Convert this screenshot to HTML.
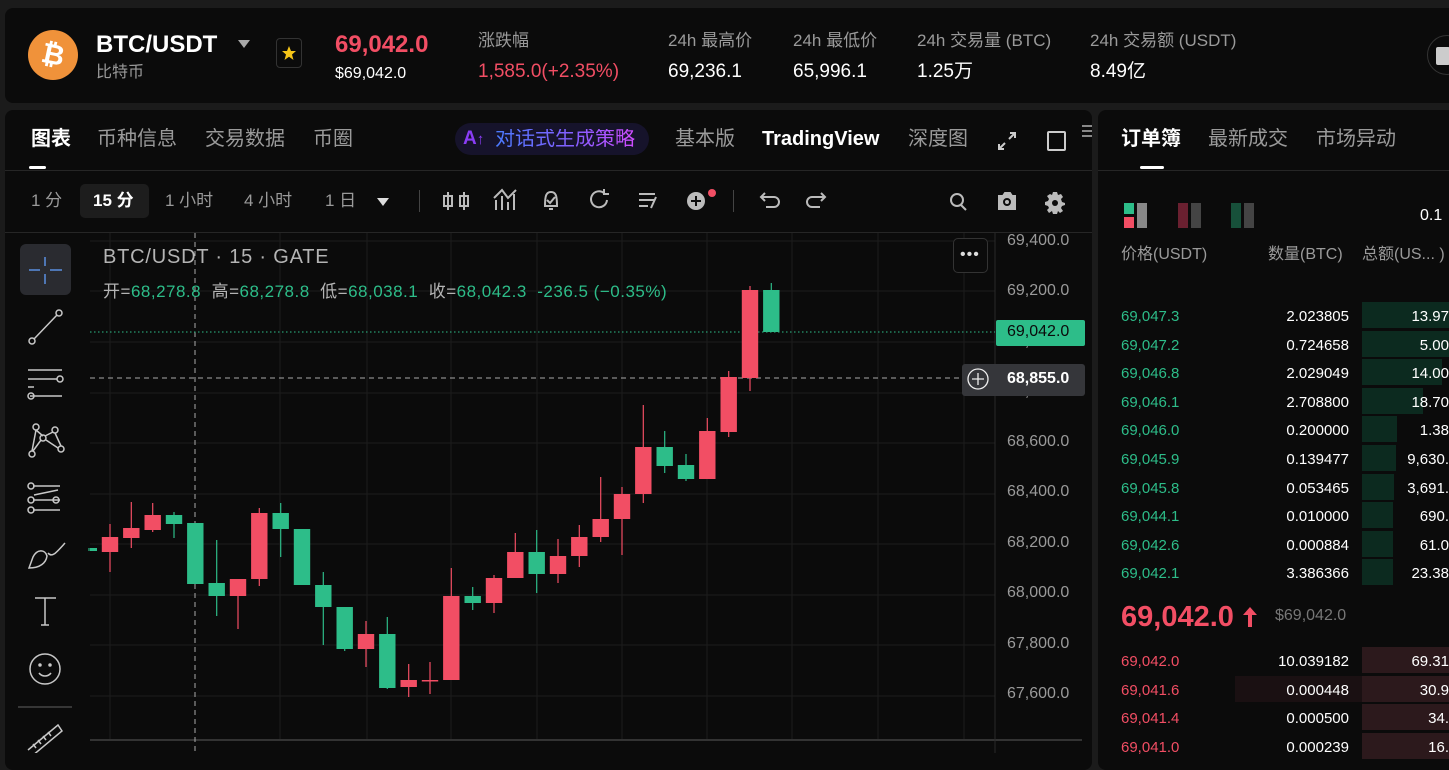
<!DOCTYPE html>
<html><head><meta charset="utf-8">
<style>
*{margin:0;padding:0;box-sizing:border-box}
body{width:1449px;height:753px;overflow:hidden;background:#1b1b1b;font-family:"Liberation Sans","Noto Sans CJK SC",sans-serif;color:#fff;position:relative}
.p{position:absolute;background:#0b0b0b;border-radius:8px}
.t{position:absolute;white-space:nowrap;line-height:1}
.g{color:#9a9a9a}
.red{color:#f24e64}
.grn{color:#2dbd89}
.ob .t{font-size:15px}
</style></head><body>
<div class="p" style="left:5px;top:8px;width:1460px;height:95px"></div>
<div class="p" style="left:5px;top:110px;width:1087px;height:660px"></div>
<div class="p" style="left:1098px;top:110px;width:360px;height:660px"></div>

<!-- header -->
<svg style="position:absolute;left:28px;top:30px" width="50" height="50"><circle cx="25" cy="25" r="25" fill="#f0923a"/><text x="25" y="34" font-size="28" font-weight="bold" fill="#fff" text-anchor="middle" font-family="Liberation Sans" transform="rotate(12 25 25)">₿</text></svg>
<div class="t" style="left:96px;top:33px;font-size:24px;font-weight:bold">BTC/USDT</div>
<svg style="position:absolute;left:238px;top:40px" width="12" height="8"><path d="M0 0H12L6 8Z" fill="#aaa"/></svg>
<div class="t g" style="left:96px;top:65px;font-size:16px">比特币</div>
<div style="position:absolute;left:276px;top:38px;width:26px;height:30px;border:1px solid #333;border-radius:4px"></div>
<svg style="position:absolute;left:281px;top:45px" width="16" height="16"><path d="M8 1L10 6H15L11 9.5L12.5 15L8 11.8L3.5 15L5 9.5L1 6H6Z" fill="#f5c518"/></svg>
<div class="t red" style="left:335px;top:33px;font-size:24px;font-weight:bold">69,042.0</div>
<div class="t" style="left:335px;top:66px;font-size:16px">$69,042.0</div>
<div class="t g" style="left:478px;top:32px;font-size:17px">涨跌幅</div>
<div class="t red" style="left:478px;top:62px;font-size:19px">1,585.0(+2.35%)</div>
<div class="t g" style="left:668px;top:32px;font-size:17px">24h 最高价</div>
<div class="t" style="left:668px;top:62px;font-size:19px">69,236.1</div>
<div class="t g" style="left:793px;top:32px;font-size:17px">24h 最低价</div>
<div class="t" style="left:793px;top:62px;font-size:19px">65,996.1</div>
<div class="t g" style="left:917px;top:32px;font-size:17px">24h 交易量 (BTC)</div>
<div class="t" style="left:917px;top:62px;font-size:19px">1.25万</div>
<div class="t g" style="left:1090px;top:32px;font-size:17px">24h 交易额 (USDT)</div>
<div class="t" style="left:1090px;top:62px;font-size:19px">8.49亿</div>
<div style="position:absolute;left:1427px;top:35px;width:40px;height:40px;border:1px solid #333;border-radius:50%"></div>
<div style="position:absolute;left:1436px;top:47px;width:14px;height:18px;background:#ccc;border-radius:2px"></div>

<!-- chart tabs -->
<div class="t" style="left:31px;top:129px;font-size:20px;font-weight:bold">图表</div>
<div class="t g" style="left:97px;top:129px;font-size:20px">币种信息</div>
<div class="t g" style="left:205px;top:129px;font-size:20px">交易数据</div>
<div class="t g" style="left:313px;top:129px;font-size:20px">币圈</div>
<div style="position:absolute;left:29px;top:166px;width:17px;height:3px;background:#fff;border-radius:2px"></div>
<div style="position:absolute;left:455px;top:123px;width:194px;height:32px;background:#16132b;border-radius:16px"></div>
<div class="t" style="left:463px;top:129px;font-size:19px;font-weight:bold;color:#8a3df5">A<span style="font-size:15px">↑</span></div>
<div class="t" style="left:495px;top:129px;font-size:20px;background:linear-gradient(90deg,#4a7bff,#8a5cff 60%,#d04cff);-webkit-background-clip:text;background-clip:text;color:transparent">对话式生成策略</div>
<div class="t g" style="left:675px;top:129px;font-size:20px">基本版</div>
<div class="t" style="left:762px;top:129px;font-size:20px;font-weight:bold">TradingView</div>
<div class="t g" style="left:908px;top:129px;font-size:20px">深度图</div>
<svg style="position:absolute;left:997px;top:131px" width="20" height="20" stroke="#ccc" stroke-width="2" fill="none"><path d="M2 18L8 12M12 8L18 2M13 2H18V7M2 13V18H7"/></svg>
<div style="position:absolute;left:1047px;top:131px;width:19px;height:20px;border:2px solid #ccc;border-radius:2px"></div>
<svg style="position:absolute;left:1082px;top:124px" width="10" height="14" stroke="#888" stroke-width="2"><path d="M0 2H10M0 7H10M0 12H10"/></svg>
<div style="position:absolute;left:5px;top:170px;width:1087px;height:1px;background:#262626"></div>

<!-- toolbar -->
<div style="position:absolute;left:80px;top:184px;width:69px;height:34px;background:#1d1d1d;border-radius:5px"></div>
<div class="t g" style="left:31px;top:192px;font-size:17px">1 分</div>
<div class="t" style="left:93px;top:192px;font-size:17px;font-weight:bold">15 分</div>
<div class="t g" style="left:165px;top:192px;font-size:17px">1 小时</div>
<div class="t g" style="left:244px;top:192px;font-size:17px">4 小时</div>
<div class="t g" style="left:325px;top:192px;font-size:17px">1 日</div>
<svg style="position:absolute;left:377px;top:198px" width="12" height="8"><path d="M0 0H12L6 8Z" fill="#ddd"/></svg>
<div style="position:absolute;left:419px;top:190px;width:1px;height:22px;background:#444"></div>
<svg style="position:absolute;left:0;top:0" width="1100" height="232" fill="none" stroke="#bbb" stroke-width="2">
<path d="M448 192V210M448 196H452V206H444V196H448M464 192V210M460 196H468V206H460Z"/>
<path d="M496 210V200M502 210V196M508 210V202M514 210V194M494 198L502 190L508 198L516 190"/>
<path d="M545 206C545 196 546 192 551 192C556 192 557 196 557 206H545ZM549 209H553M547 200L550 203L555 197"/>
<path d="M607 200A8 8 0 1 1 604 193M604 189V194H609"/>
<path d="M639 194H655M639 200H655M639 206H648M651 208L656 197"/>
<circle cx="696" cy="201" r="9" fill="#bbb" stroke="none"/><path d="M691 201H701M696 196V206" stroke="#0b0b0b"/>
<path d="M761 197H774A5 5 0 0 1 774 207H766M765 193L761 197L765 201"/>
<path d="M825 197H812A5 5 0 0 0 812 207H820M821 193L825 197L821 201"/>
<circle cx="957" cy="200" r="6"/><path d="M961 205L966 210"/>
<path d="M999 196H1003L1005 193H1010L1012 196H1015V209H999Z" fill="#bbb"/><circle cx="1007" cy="202" r="3" stroke="#0b0b0b"/>
<path fill="#bbb" stroke="none" d="M1053 192H1057L1058 195L1061 194L1063 197L1061 199L1062 202L1065 203V205L1062 206L1061 208L1063 211L1060 213L1058 211L1057 214H1053L1052 211L1049 213L1047 210L1049 208L1048 206L1045 205V202L1048 201L1049 199L1047 196L1050 194L1052 195Z"/><circle cx="1055" cy="203" r="3" fill="#0b0b0b" stroke="none"/>
</svg>
<div style="position:absolute;left:708px;top:189px;width:8px;height:8px;background:#f24e64;border-radius:50%"></div>
<div style="position:absolute;left:733px;top:190px;width:1px;height:22px;background:#444"></div>
<div style="position:absolute;left:5px;top:232px;width:1087px;height:1px;background:#262626"></div>

<!-- left tools -->
<div style="position:absolute;left:20px;top:244px;width:51px;height:51px;background:#2a2b30;border-radius:6px"></div>
<svg style="position:absolute;left:0;top:0" width="90" height="753" fill="none" stroke="#c8c8c8" stroke-width="1.5">
<path d="M45 257V266M45 274V284M29 270H40M50 270H62" stroke="#5a8fe0"/>
<circle cx="32" cy="341" r="3"/><circle cx="59" cy="313" r="3"/><path d="M34 339L57 315"/>
<path d="M28 370H62M28 379H57M30 396H62M28 387H34"/><circle cx="60" cy="379" r="3"/><circle cx="31" cy="396" r="3"/>
<circle cx="36" cy="427" r="3"/><circle cx="55" cy="430" r="3"/><circle cx="43" cy="438" r="3"/><circle cx="32" cy="454" r="3"/><circle cx="61" cy="449" r="3"/>
<path d="M36 430L43 436M45 436L53 432M33 451L41 440M46 440L58 448M36 430L32 451M55 433L61 446"/>
<path d="M33 486H60M33 500H60M33 510H60M34 495L58 490" /><circle cx="31" cy="486" r="3"/><circle cx="31" cy="500" r="3"/><circle cx="31" cy="510" r="3"/><circle cx="56" cy="500" r="3"/>
<path d="M29 568L33 557C37 549 45 549 47 556C46 563 40 568 29 568ZM48 553C52 558 56 553 65 543"/>
<path d="M35 598H56M45 598V625M41 625H49"/>
<circle cx="45" cy="669" r="15"/><circle cx="40" cy="665" r="1" fill="#c8c8c8"/><circle cx="50" cy="665" r="1" fill="#c8c8c8"/><path d="M39 673C42 677 48 677 51 673"/>
<path d="M18 707H72" stroke="#444"/>
<path d="M28 750L58 725L62 731L32 756M36 748L33 744M41 744L38 740M46 740L43 736M51 736L48 732"/>
</svg>

<!-- chart -->
<svg style="position:absolute;left:0;top:0" width="1092" height="753">
<g stroke="#1d1d1d" stroke-width="1">
<path d="M110 233V740M280 233V740M367 233V740M451 233V740M537 233V740M622 233V740M707 233V740M792 233V740M878 233V740M964 233V740"/>
<path d="M90 241H995M90 291H995M90 342H995M90 393H995M90 443H995M90 494H995M90 544H995M90 595H995M90 645H995M90 696H995"/>
</g>
<path d="M90 740H1082" stroke="#333" stroke-width="2"/>
<path d="M995 233V753" stroke="#2a2a2a"/>
<path d="M195 233V753" stroke="#aaa" stroke-dasharray="5 4"/>
<path d="M90 378H962" stroke="#aaa" stroke-dasharray="5 4"/>
<path d="M90 332H995" stroke="#2dbd89" stroke-dasharray="1.5 2.5"/>
<g id="c"></g>
</svg>
<div class="t" style="left:103px;top:247px;font-size:20px;color:#b4b4b4;letter-spacing:0.8px">BTC/USDT · 15 · GATE</div>
<div class="t" style="left:103px;top:283px;font-size:17px;color:#b4b4b4;letter-spacing:0.5px">开=<span class="grn">68,278.8</span>&nbsp; 高=<span class="grn">68,278.8</span>&nbsp; 低=<span class="grn">68,038.1</span>&nbsp; 收=<span class="grn">68,042.3 &nbsp;-236.5 (−0.35%)</span></div>
<div style="position:absolute;left:953px;top:238px;width:35px;height:35px;border:1px solid #333;border-radius:5px;background:#0b0b0b"></div>
<div class="t" style="left:960px;top:247px;font-size:16px;color:#ddd;letter-spacing:1px">•••</div>
<div class="t g" style="left:1007px;top:233px;font-size:16px">69,400.0</div>
<div class="t g" style="left:1007px;top:283px;font-size:16px">69,200.0</div>
<div class="t g" style="left:1007px;top:334px;font-size:16px">69,000.0</div>
<div class="t g" style="left:1007px;top:384px;font-size:16px">68,800.0</div>
<div class="t g" style="left:1007px;top:434px;font-size:16px">68,600.0</div>
<div class="t g" style="left:1007px;top:484px;font-size:16px">68,400.0</div>
<div class="t g" style="left:1007px;top:535px;font-size:16px">68,200.0</div>
<div class="t g" style="left:1007px;top:585px;font-size:16px">68,000.0</div>
<div class="t g" style="left:1007px;top:636px;font-size:16px">67,800.0</div>
<div class="t g" style="left:1007px;top:686px;font-size:16px">67,600.0</div>
<div style="position:absolute;left:996px;top:320px;width:89px;height:26px;background:#2dbd89;border-radius:2px"></div>
<div class="t" style="left:1007px;top:324px;font-size:16px;color:#0b0b0b">69,042.0</div>
<div style="position:absolute;left:962px;top:364px;width:123px;height:32px;background:#35363a;border-radius:3px"></div>
<svg style="position:absolute;left:967px;top:368px" width="22" height="22" fill="none" stroke="#eee" stroke-width="1.3"><circle cx="11" cy="11" r="10"/><path d="M11 5V17M5 11H17"/></svg>
<div class="t" style="left:1007px;top:371px;font-size:16px;font-weight:bold">68,855.0</div>

<!-- order book -->
<div class="t" style="left:1121px;top:129px;font-size:20px;font-weight:bold">订单簿</div>
<div class="t g" style="left:1208px;top:129px;font-size:20px">最新成交</div>
<div class="t g" style="left:1316px;top:129px;font-size:20px">市场异动</div>
<div style="position:absolute;left:1140px;top:166px;width:24px;height:3px;background:#fff;border-radius:2px"></div>
<div style="position:absolute;left:1098px;top:170px;width:360px;height:1px;background:#262626"></div>
<svg style="position:absolute;left:1120px;top:200px" width="140" height="30">
<rect x="4" y="3" width="10" height="11" fill="#2dbd89"/><rect x="4" y="17" width="10" height="11" fill="#f24e64"/><rect x="17" y="3" width="10" height="25" fill="#888"/>
<rect x="58" y="3" width="10" height="25" fill="#6a2030"/><rect x="71" y="3" width="10" height="25" fill="#444"/>
<rect x="111" y="3" width="10" height="25" fill="#17503a"/><rect x="124" y="3" width="10" height="25" fill="#444"/>
</svg>
<div class="t" style="left:1420px;top:208px;font-size:16px">0.1</div>
<div class="t g" style="left:1121px;top:247px;font-size:16px">价格(USDT)</div>
<div class="t g" style="left:1268px;top:247px;font-size:16px">数量(BTC)</div>
<div class="t g" style="left:1362px;top:247px;font-size:16px">总额(US... )</div>
<div id="ob" class="ob"></div>
<div class="t red" style="left:1121px;top:603px;font-size:29px;font-weight:bold">69,042.0</div>
<svg style="position:absolute;left:1243px;top:607px" width="14" height="20"><path d="M7 0L14 8H9V20H5V8H0Z" fill="#f24e64"/></svg>
<div class="t" style="left:1275px;top:608px;font-size:16px;color:#777">$69,042.0</div>

<script>
var C=[[89,'g',548,551,548,551],[110,'r',537,552,524,572],[131.3,'r',528,538,502,548],[152.7,'r',515,530,503,532],[174,'g',515,524,512,538],[195.3,'g',523,584,523,584],[216.7,'g',583,596,540,616],[238,'r',579,596,579,629],[259.3,'r',513,579,508,586],[280.7,'g',513,529,503,557],[302,'g',529,585,529,585],[323.3,'g',585,607,572,645],[344.7,'g',607,649,607,651],[366,'r',634,649,621,667],[387.3,'g',634,688,617,689],[408.7,'r',680,687,664,697],[430,'r',680,681,662,694],[451.3,'r',596,680,568,680],[472.7,'g',596,603,587,610],[494,'r',578,603,575,613],[515.3,'r',552,578,533,578],[536.7,'g',552,574,530,593],[558,'r',556,574,539,583],[579.3,'r',537,556,525,567],[600.7,'r',519,537,477,542],[622,'r',494,519,487,555],[643.3,'r',447,494,405,503],[664.7,'g',447,466,431,473],[686,'g',465,479,454,481],[707.3,'r',431,479,418,479],[728.7,'r',377,432,371,437],[750,'r',290,378,286,391],[771.3,'g',290,332,283,332]];
var s='';C.forEach(function(c){var col=c[1]=='r'?'#f24e64':'#2dbd89';var x0=c[0]-8.2,w=16.4;if(c[0]<92){x0=90;w=7;}
s+='<path d="M'+c[0]+' '+c[4]+'V'+c[5]+'" stroke="'+col+'" stroke-width="1.2"/>';
var h=Math.max(c[3]-c[2],1.5);s+='<rect x="'+x0+'" y="'+c[2]+'" width="'+w+'" height="'+h+'" fill="'+col+'"/>';});
document.getElementById('c').innerHTML=s;
var A=[['69,047.3','2.023805','13.97',1449],['69,047.2','0.724658','5.00',1449],['69,046.8','2.029049','14.00',1442],['69,046.1','2.708800','18.70',1423],['69,046.0','0.200000','1.38',1397],['69,045.9','0.139477','9,630.',1396],['69,045.8','0.053465','3,691.',1394],['69,044.1','0.010000','690.',1393],['69,042.6','0.000884','61.0',1393],['69,042.1','3.386366','23.38',1393]];
var B=[['69,042.0','10.039182','69.31'],['69,041.6','0.000448','30.9'],['69,041.4','0.000500','34.'],['69,041.0','0.000239','16.']];
var o='';A.forEach(function(a,i){var y=302+i*28.6;
o+='<div style="position:absolute;left:1362px;top:'+y+'px;width:'+(a[3]-1362)+'px;height:26px;background:#0c2a1f"></div>';
o+='<div class="t grn" style="left:1121px;top:'+(y+7)+'px">'+a[0]+'</div><div class="t" style="right:100px;top:'+(y+7)+'px">'+a[1]+'</div><div class="t" style="right:0;top:'+(y+7)+'px">'+a[2]+'</div>';});
B.forEach(function(a,i){var y=647+i*28.5;
if(i==1)o+='<div style="position:absolute;left:1235px;top:'+y+'px;width:127px;height:26px;background:#1a1012"></div>';
o+='<div style="position:absolute;left:1362px;top:'+y+'px;width:90px;height:26px;background:#2c191c"></div>';
o+='<div class="t red" style="left:1121px;top:'+(y+7)+'px">'+a[0]+'</div><div class="t" style="right:100px;top:'+(y+7)+'px">'+a[1]+'</div><div class="t" style="right:0;top:'+(y+7)+'px">'+a[2]+'</div>';});
document.getElementById('ob').innerHTML=o;
</script>
</body></html>
